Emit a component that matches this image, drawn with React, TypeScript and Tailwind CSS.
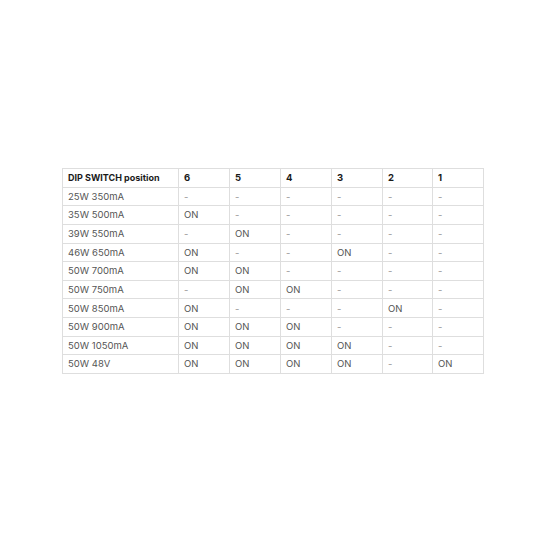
import React from "react";

const rows: [string, string[]][] = [
  ["25W 350mA", ["-", "-", "-", "-", "-", "-"]],
  ["35W 500mA", ["ON", "-", "-", "-", "-", "-"]],
  ["39W 550mA", ["-", "ON", "-", "-", "-", "-"]],
  ["46W 650mA", ["ON", "-", "-", "ON", "-", "-"]],
  ["50W 700mA", ["ON", "ON", "-", "-", "-", "-"]],
  ["50W 750mA", ["-", "ON", "ON", "-", "-", "-"]],
  ["50W 850mA", ["ON", "-", "-", "-", "ON", "-"]],
  ["50W 900mA", ["ON", "ON", "ON", "-", "-", "-"]],
  ["50W 1050mA", ["ON", "ON", "ON", "ON", "-", "-"]],
  ["50W 48V", ["ON", "ON", "ON", "ON", "-", "ON"]],
];

const headers = ["6", "5", "4", "3", "2", "1"];

export default function App() {
  return (
    <div
      className="w-[550px] h-[550px] bg-white flex pt-[168px] pl-[62px]"
      style={{ fontFamily: "Inter, 'Liberation Sans', sans-serif" }}
    >
      <table className="border-collapse table-fixed w-[421px] h-[206px] text-[9.5px] self-start">
        <colgroup>
          <col className="w-[116px]" />
          <col className="w-[51px]" />
          <col className="w-[51px]" />
          <col className="w-[51px]" />
          <col className="w-[51px]" />
          <col className="w-[50px]" />
          <col className="w-[51px]" />
        </colgroup>
        <thead>
          <tr className="h-[18.6px]">
            <th className="border border-[#dedede] text-left font-bold text-[9px] text-[#1a1a1a] px-[5px] py-0 align-middle leading-none">
              DIP SWITCH position
            </th>
            {headers.map((h) => (
              <th
                key={h}
                className="border border-[#dedede] text-left font-bold text-[9.5px] text-[#1a1a1a] px-[5px] py-0 align-middle leading-none"
              >
                {h}
              </th>
            ))}
          </tr>
        </thead>
        <tbody>
          {rows.map(([label, vals]) => (
            <tr key={label} className="h-[18.6px]">
              <td className="border border-[#dedede] text-[#555555] px-[5px] py-0 align-middle leading-none">
                {label}
              </td>
              {vals.map((v, i) => (
                <td
                  key={i}
                  className={
                    "border border-[#dedede] px-[5px] py-0 align-middle leading-none " +
                    (v === "-" ? "text-[#9a9a9a]" : "text-[#555555]")
                  }
                >
                  {v}
                </td>
              ))}
            </tr>
          ))}
        </tbody>
      </table>
    </div>
  );
}
